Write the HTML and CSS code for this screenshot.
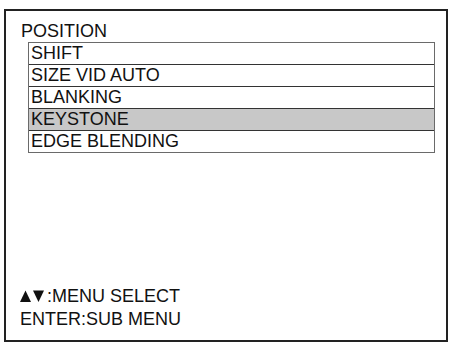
FILE: index.html
```html
<!DOCTYPE html>
<html>
<head>
<meta charset="utf-8">
<link rel="stylesheet" href="styles.css">
</head>
<body>
<div class="frame">
  <div class="title">POSITION</div>
  <div class="menu">
    <div class="row">SHIFT</div>
    <div class="row">SIZE VID AUTO</div>
    <div class="row">BLANKING</div>
    <div class="row selected">KEYSTONE</div>
    <div class="row">EDGE BLENDING</div>
  </div>
  <div class="footer">
    <div class="hint"><svg class="arrows" width="26" height="12" viewBox="0 0 26 12"><polygon points="0,12 5.5,0.5 11,12" fill="#111"/><polygon points="13,0.5 24,0.5 18.5,12" fill="#111"/></svg>:MENU SELECT</div>
    <div class="hint">ENTER:SUB MENU</div>
  </div>
</div>
</body>
</html>
```
FILE: styles.css
```css
html, body {
  margin: 0;
  padding: 0;
  background: #fff;
}
body {
  width: 450px;
  height: 343px;
  overflow: hidden;
  font-family: "Liberation Sans", Arial, sans-serif;
  color: #111;
}
.frame {
  box-sizing: border-box;
  margin: 9px 2px 0 4px;
  width: 444px;
  height: 333px;
  border: 2px solid #222;
  display: flex;
  flex-direction: column;
  padding: 10px 0 9px 0;
}
.title {
  margin-left: 15px;
  font-size: 18px;
  line-height: 21px;
}
.menu {
  margin-left: 22px;
  width: 407px;
  box-sizing: border-box;
  border: 1px solid #6a6a6a;
}
.row {
  font-size: 18px;
  line-height: 21px;
  padding-left: 2px;
  border-bottom: 1px solid #333;
}
.row:last-child {
  border-bottom: none;
}
.row.selected {
  background: #c8c8c8;
}
.footer {
  margin-top: auto;
  margin-left: 14px;
}
.hint {
  font-size: 18px;
  line-height: 23px;
  display: flex;
  align-items: baseline;
}
.arrows {
  margin-right: 1px;
}
```
